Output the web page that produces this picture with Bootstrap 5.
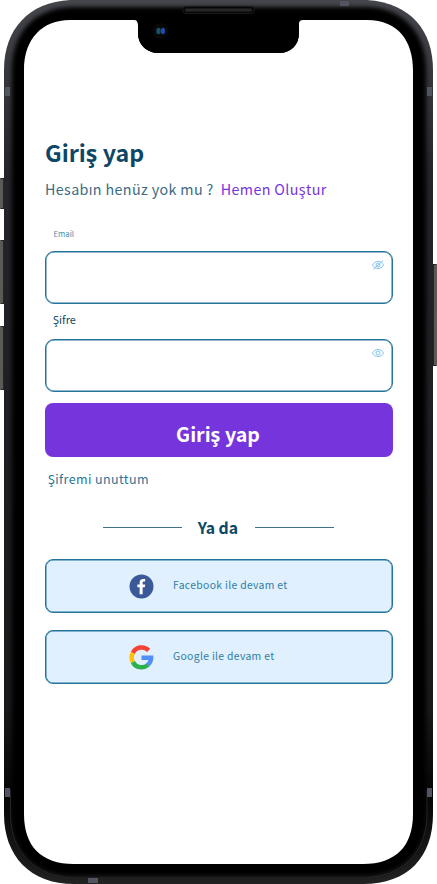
<!DOCTYPE html>
<html lang="tr">
<head>
<meta charset="utf-8">
<meta name="viewport" content="width=device-width, initial-scale=1">
<title>Giriş yap</title>
<link href="https://cdn.jsdelivr.net/npm/bootstrap@5.3.0/dist/css/bootstrap.min.css" rel="stylesheet">
<style>
body{font-family:"Noto Sans CJK SC","Noto Sans CJK JP","Noto Sans",sans-serif;color:#0e4765;background:#fff}
.phone{width:437px;height:884px}
.frame{left:0;top:0;pointer-events:none}
.screen{padding:136px 44px 0 45px}
.title{font-size:23.2px;line-height:32px;height:32px}
.sub{font-size:14.3px;line-height:24px;margin-top:9px;letter-spacing:.37px;color:#3c6b83;gap:7px;white-space:nowrap}
.sub a{color:#7635dc}
.lbl-mail{font-size:7.8px;line-height:12px;margin:27px 0 11px 8.5px;color:#4990b1}
.lbl-pass{font-size:11px;line-height:16px;margin:7px 0 12px 8px}
.field{height:53px;border:1px solid #24739a;border-radius:9px;background:#fff;padding:0;box-shadow:inset 0 0 0 .5px #24739a}
.eye{right:8px;top:7px;color:#80c4f2}
.login{height:53.5px;margin-top:11px;border:0;border-radius:8px;background:#7635dc;color:#fff;font-size:19.6px;padding:8px 2px 0 0;line-height:30px}
.login:hover{background:#6929cf;color:#fff}
.forgot{font-size:12.5px;line-height:20px;margin:12px 0 0 3px;letter-spacing:.4px;color:#2a7498;width:max-content}
.or{font-size:15.8px;line-height:24px;margin:27.500px 59px 0 58px}
.or span{margin-right:1px}
.or i{width:79px;height:1px;background:#3f7189;margin-top:-1px}
.social{height:53.5px;border:1px solid #24739a;border-radius:8px;background:#e1f0ff;color:#2f7da3;font-size:10.4px;padding:2px 0 0 82.5px;gap:19.5px;letter-spacing:.32px;box-shadow:inset 0 0 0 .5px #24739a}
.social span{line-height:16px;margin-top:-3px}
.fb{margin-top:19px}
.gg{margin-top:17.5px}
</style>
</head>
<body>
<div class="phone position-relative overflow-hidden">
<svg class="frame position-absolute" width="437" height="884" viewBox="0 0 437 884" aria-hidden="true">
<defs>
<linearGradient id="rim" x1="0" y1="0" x2="0" y2="1"><stop offset="0" stop-color="#45464c"/><stop offset=".09" stop-color="#36373d"/><stop offset=".2" stop-color="#242429"/><stop offset=".8" stop-color="#19191c"/><stop offset=".9" stop-color="#050506"/><stop offset="1" stop-color="#222"/></linearGradient>
<filter id="soft" x="-5%" y="-5%" width="110%" height="110%"><feGaussianBlur stdDeviation="2.2"/></filter>
<filter id="tiny"><feGaussianBlur stdDeviation=".7"/></filter>
</defs>
<g fill="#252525"><rect x="0" y="178" width="6" height="31" rx="1"/><rect x="0" y="240" width="6" height="64" rx="1"/><rect x="0" y="326" width="6" height="64" rx="1"/><rect x="431" y="264" width="6" height="102" rx="1"/></g>
<g fill="#5a5a57"><rect x="0" y="179" width="3" height="29"/><rect x="0" y="241" width="3" height="62"/><rect x="0" y="327" width="3" height="62"/><rect x="434" y="265" width="3" height="100"/></g>
<path d="M70 0H367C411 3 433 31 433 70V814C433 857 408 884 363 884H74C30 884 4 856 4 814V70C4 29 29 2 70 0Z" fill="url(#rim)"/>
<path d="M70 7H367C405 8 426 35 426 70V814C426 852 402 876 363 876H74C34 876 12 851 12 814V70C12 34 33 9 70 7Z" fill="#000" filter="url(#soft)"/>
<path d="M10.500 790V816C11 853 36 877 74 878H363C403 877 426 853 427 816V790" fill="none" stroke="#252527" stroke-width="1"/>
<path d="M70 20H134Q138 20 138 25V33C138 45 147 53 159 53H279C291 53 299 45 299 33V23Q299 20 303 20H367C399 20 413 42 413 70V814C413 846 396 864 363 864H74C41 864 24 846 24 814V70C24 39 42 20 70 20Z" fill="#fff"/>
<path d="M135 19Q138 20 138 25V33C138 45 147 53 159 53H279C291 53 299 45 299 33V23Q299 20 303 19Z" fill="#000"/>
<rect x="182.500" y="6.500" width="72" height="7" rx="3.500" fill="#080808" stroke="#191919"/>
<rect x="185" y="8.500" width="67" height="3" rx="1.500" fill="#272727"/>
<circle cx="160.500" cy="31" r="8" fill="#080808"/><g filter="url(#tiny)"><ellipse cx="158.500" cy="31" rx="2.200" ry="3.200" fill="#1a5068"/><ellipse cx="163" cy="31" rx="2" ry="3.200" fill="#2349b0"/></g>
<g fill="#505560"><rect x="5" y="87" width="5" height="9"/><rect x="427" y="87" width="5" height="9"/><rect x="5" y="788" width="5" height="9"/><rect x="427" y="788" width="5" height="9"/><rect x="340" y="1" width="9" height="5"/><rect x="88" y="878" width="10" height="5"/></g>
</svg>
<main class="screen position-relative">
<h1 class="title fw-bold mb-0">Giriş yap</h1>
<div class="sub d-flex"><span>Hesabın henüz yok mu ?</span><a class="text-decoration-none" href="#">Hemen Oluştur</a></div>
<form>
<label class="lbl-mail d-block" for="mail"><span>Email</span></label>
<div class="position-relative"><input id="mail" type="email" class="field form-control">
<svg class="eye position-absolute" width="14" height="14" viewBox="0 0 14 14" fill="none" stroke="currentColor"><path d="M1.500 7C3.500 2.300 10.500 2.300 12.500 7C10.500 11.700 3.500 11.700 1.500 7Z"/><circle cx="7" cy="7" r="2"/><path d="M2.200 11.300 12 2.700"/></svg></div>
<label class="lbl-pass d-block" for="pass"><span>Şifre</span></label>
<div class="position-relative"><input id="pass" type="password" class="field form-control">
<svg class="eye position-absolute" width="14" height="14" viewBox="0 0 14 14" fill="none" stroke="currentColor"><path d="M1.500 7C3.500 2.300 10.500 2.300 12.500 7C10.500 11.700 3.500 11.700 1.500 7Z"/><circle cx="7" cy="7" r="2"/></svg></div>
<button type="button" class="login btn w-100 fw-bold"><span>Giriş yap</span></button>
</form>
<a class="forgot d-block text-decoration-none" href="#">Şifremi unuttum</a>
<div class="or d-flex align-items-center justify-content-between fw-bold"><i></i><span>Ya da</span><i></i></div>
<button type="button" class="social fb btn w-100 d-flex align-items-center">
<svg width="25" height="25" viewBox="0 0 24 24"><circle cx="12" cy="12" r="11.500" fill="#3b5998"/><path d="M10.200 19.500V12.800H8V10h2.200V8.200C10.200 5.800 11.500 4.700 13.600 4.700H15.500V7.300H14.200C13.300 7.300 13.100 7.800 13.100 8.500V10H15.500L15.200 12.800H13.100V19.500Z" fill="#fff"/></svg><span>Facebook ile devam et</span></button>
<button type="button" class="social gg btn w-100 d-flex align-items-center">
<svg width="25" height="25" viewBox="0 0 24 24"><g fill="none" stroke-width="4.300"><path d="M18.900 5.200A9.400 9.400 0 0 0 3.700 7.600" stroke="#f44336"/><path d="M3.700 7.600A9.400 9.400 0 0 0 3.700 16.400" stroke="#ffc107"/><path d="M3.700 16.400A9.400 9.400 0 0 0 18.200 19.100" stroke="#2bb24c"/></g><path d="M12 10H23.300C23.900 14 22.600 18 19.500 20.600L16.200 17.800C17.500 16.900 18.300 15.900 18.600 14.500H12Z" fill="#518ef8"/></svg><span>Google ile devam et</span></button>
</main>
</div>
<script src="https://cdn.jsdelivr.net/npm/bootstrap@5.3.0/dist/js/bootstrap.bundle.min.js"></script>
</body>
</html>
